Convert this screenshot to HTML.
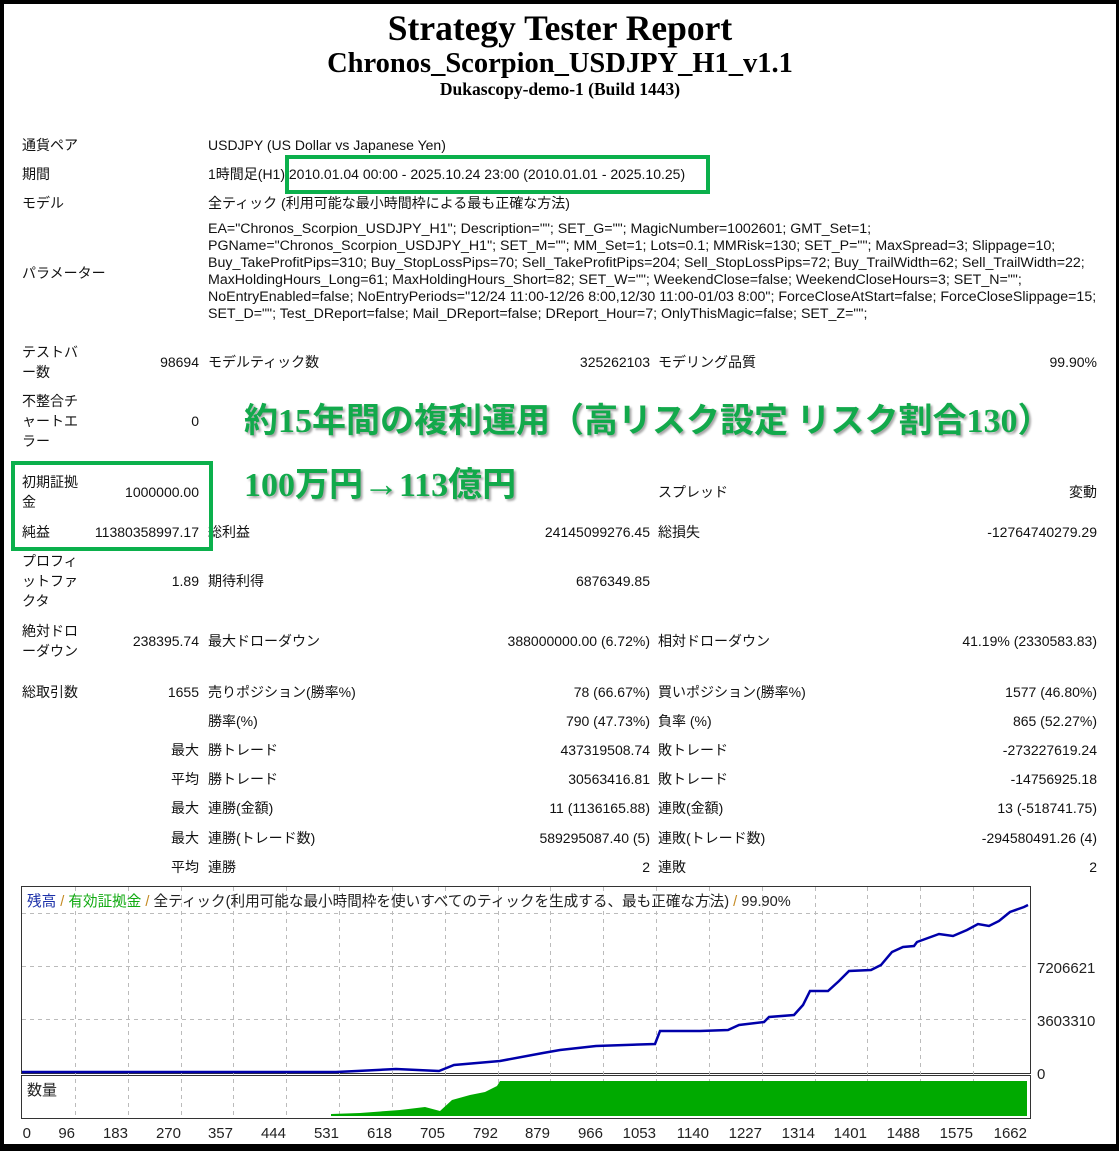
<!DOCTYPE html>
<html><head><meta charset="utf-8"><style>
*{margin:0;padding:0;box-sizing:border-box}
html,body{width:1119px;height:1151px;overflow:hidden;background:#000}
#pg{position:absolute;left:4px;top:4px;width:1112px;height:1140px;background:#fff;overflow:hidden}
.t{position:absolute;white-space:nowrap;font-family:"Liberation Sans","Noto Sans CJK JP",sans-serif;font-size:14px;color:#111;line-height:20px}
.h{position:absolute;left:0;width:1112px;text-align:center;font-family:"Liberation Serif","Noto Serif CJK SC",serif;font-weight:bold;color:#000;white-space:nowrap}
.ov{position:absolute;white-space:nowrap;font-family:"Liberation Serif","Noto Sans CJK JP",sans-serif;font-weight:bold;color:#12a94b;text-shadow:2px 2px 2px rgba(0,0,0,.35);line-height:40px}
.box{position:absolute;border:4px solid #0bb04c}
</style></head><body><div id="pg">
<div class="h" style="top:4px;font-size:35.5px;line-height:40px">Strategy Tester Report</div>
<div class="h" style="top:43px;font-size:28.5px;line-height:34px">Chronos_Scorpion_USDJPY_H1_v1.1</div>
<div class="h" style="top:75px;font-size:17.5px;line-height:20px">Dukascopy-demo-1 (Build 1443)</div>
</div>
<div id="c" style="position:absolute;left:0;top:0;width:1119px;height:1151px">
<div class="t" style="left:22px;top:135px">通貨ペア</div><div class="t" style="left:208px;top:135px">USDJPY (US Dollar vs Japanese Yen)</div>
<div class="t" style="left:22px;top:164px">期間</div><div class="t" style="left:208px;top:164px">1時間足(H1) 2010.01.04 00:00 - 2025.10.24 23:00 (2010.01.01 - 2025.10.25)</div>
<div class="t" style="left:22px;top:193px">モデル</div><div class="t" style="left:208px;top:193px">全ティック (利用可能な最小時間枠による最も正確な方法)</div>
<div class="t" style="left:22px;top:263px">パラメーター</div>
<div class="t" style="left:208px;top:221px;line-height:17px;font-size:14.2px">EA="Chronos_Scorpion_USDJPY_H1"; Description=""; SET_G=""; MagicNumber=1002601; GMT_Set=1;<br>PGName="Chronos_Scorpion_USDJPY_H1"; SET_M=""; MM_Set=1; Lots=0.1; MMRisk=130; SET_P=""; MaxSpread=3; Slippage=10;<br>Buy_TakeProfitPips=310; Buy_StopLossPips=70; Sell_TakeProfitPips=204; Sell_StopLossPips=72; Buy_TrailWidth=62; Sell_TrailWidth=22;<br>MaxHoldingHours_Long=61; MaxHoldingHours_Short=82; SET_W=""; WeekendClose=false; WeekendCloseHours=3; SET_N="";<br>NoEntryEnabled=false; NoEntryPeriods="12/24 11:00-12/26 8:00,12/30 11:00-01/03 8:00"; ForceCloseAtStart=false; ForceCloseSlippage=15;<br>SET_D=""; Test_DReport=false; Mail_DReport=false; DReport_Hour=7; OnlyThisMagic=false; SET_Z="";</div>

<div class="t" style="left:22px;top:342px">テストバ<br>ー数</div><div class="t" style="right:920px;top:352px">98694</div><div class="t" style="left:208px;top:352px">モデルティック数</div><div class="t" style="right:469px;top:352px">325262103</div><div class="t" style="left:658px;top:352px">モデリング品質</div><div class="t" style="right:22px;top:352px">99.90%</div>
<div class="t" style="left:22px;top:391px">不整合チ<br>ャートエ<br>ラー</div><div class="t" style="right:920px;top:411px">0</div>
<div class="t" style="left:22px;top:472px">初期証拠<br>金</div><div class="t" style="right:920px;top:482px">1000000.00</div><div class="t" style="left:658px;top:482px">スプレッド</div><div class="t" style="right:22px;top:482px">変動</div>
<div class="t" style="left:22px;top:522px">純益</div><div class="t" style="right:920px;top:522px">11380358997.17</div><div class="t" style="left:208px;top:522px">総利益</div><div class="t" style="right:469px;top:522px">24145099276.45</div><div class="t" style="left:658px;top:522px">総損失</div><div class="t" style="right:22px;top:522px">-12764740279.29</div>
<div class="t" style="left:22px;top:551px">プロフィ<br>ットファ<br>クタ</div><div class="t" style="right:920px;top:571px">1.89</div><div class="t" style="left:208px;top:571px">期待利得</div><div class="t" style="right:469px;top:571px">6876349.85</div>
<div class="t" style="left:22px;top:621px">絶対ドロ<br>ーダウン</div><div class="t" style="right:920px;top:631px">238395.74</div><div class="t" style="left:208px;top:631px">最大ドローダウン</div><div class="t" style="right:469px;top:631px">388000000.00 (6.72%)</div><div class="t" style="left:658px;top:631px">相対ドローダウン</div><div class="t" style="right:22px;top:631px">41.19% (2330583.83)</div>
<div class="t" style="left:22px;top:682px">総取引数</div><div class="t" style="right:920px;top:682px">1655</div><div class="t" style="left:208px;top:682px">売りポジション(勝率%)</div><div class="t" style="right:469px;top:682px">78 (66.67%)</div><div class="t" style="left:658px;top:682px">買いポジション(勝率%)</div><div class="t" style="right:22px;top:682px">1577 (46.80%)</div>
<div class="t" style="left:208px;top:711px">勝率(%)</div><div class="t" style="right:469px;top:711px">790 (47.73%)</div><div class="t" style="left:658px;top:711px">負率 (%)</div><div class="t" style="right:22px;top:711px">865 (52.27%)</div>
<div class="t" style="right:920px;top:740px">最大</div><div class="t" style="left:208px;top:740px">勝トレード</div><div class="t" style="right:469px;top:740px">437319508.74</div><div class="t" style="left:658px;top:740px">敗トレード</div><div class="t" style="right:22px;top:740px">-273227619.24</div>
<div class="t" style="right:920px;top:769px">平均</div><div class="t" style="left:208px;top:769px">勝トレード</div><div class="t" style="right:469px;top:769px">30563416.81</div><div class="t" style="left:658px;top:769px">敗トレード</div><div class="t" style="right:22px;top:769px">-14756925.18</div>
<div class="t" style="right:920px;top:798px">最大</div><div class="t" style="left:208px;top:798px">連勝(金額)</div><div class="t" style="right:469px;top:798px">11 (1136165.88)</div><div class="t" style="left:658px;top:798px">連敗(金額)</div><div class="t" style="right:22px;top:798px">13 (-518741.75)</div>
<div class="t" style="right:920px;top:828px">最大</div><div class="t" style="left:208px;top:828px">連勝(トレード数)</div><div class="t" style="right:469px;top:828px">589295087.40 (5)</div><div class="t" style="left:658px;top:828px">連敗(トレード数)</div><div class="t" style="right:22px;top:828px">-294580491.26 (4)</div>
<div class="t" style="right:920px;top:857px">平均</div><div class="t" style="left:208px;top:857px">連勝</div><div class="t" style="right:469px;top:857px">2</div><div class="t" style="left:658px;top:857px">連敗</div><div class="t" style="right:22px;top:857px">2</div>

<div class="box" style="left:285px;top:155px;width:425px;height:39px"></div>
<div class="box" style="left:11px;top:461px;width:202px;height:90px"></div>
<div class="ov" style="left:244px;top:402px;font-size:34px">約15年間の複利運用（高リスク設定 リスク割合130）</div>
<div class="ov" style="left:244px;top:464px;font-size:34px">100万円<span style="font-size:36px">→</span>113億円</div>

<svg style="position:absolute;left:0;top:0" width="1119" height="1151">
<rect x="21.5" y="886.5" width="1009" height="187" fill="#fff" stroke="#333"/>
<rect x="21.5" y="1075.5" width="1009" height="43" fill="#fff" stroke="#333"/>
<g stroke="#bbb" stroke-dasharray="4,4" stroke-width="1">
<line x1="22" y1="913.5" x2="1030" y2="913.5"/><line x1="22" y1="966.5" x2="1030" y2="966.5"/><line x1="22" y1="1019.5" x2="1030" y2="1019.5"/>
<line x1="75.5" y1="887" x2="75.5" y2="1118"/><line x1="128.5" y1="887" x2="128.5" y2="1118"/><line x1="181.5" y1="887" x2="181.5" y2="1118"/><line x1="233.5" y1="887" x2="233.5" y2="1118"/><line x1="286.5" y1="887" x2="286.5" y2="1118"/><line x1="339.5" y1="887" x2="339.5" y2="1118"/><line x1="392.5" y1="887" x2="392.5" y2="1118"/><line x1="445.5" y1="887" x2="445.5" y2="1118"/><line x1="498.5" y1="887" x2="498.5" y2="1118"/><line x1="550.5" y1="887" x2="550.5" y2="1118"/><line x1="603.5" y1="887" x2="603.5" y2="1118"/><line x1="656.5" y1="887" x2="656.5" y2="1118"/><line x1="709.5" y1="887" x2="709.5" y2="1118"/><line x1="762.5" y1="887" x2="762.5" y2="1118"/><line x1="815.5" y1="887" x2="815.5" y2="1118"/><line x1="867.5" y1="887" x2="867.5" y2="1118"/><line x1="920.5" y1="887" x2="920.5" y2="1118"/><line x1="973.5" y1="887" x2="973.5" y2="1118"/>
</g>
<polygon fill="#00aa00" points="331,1116 331,1114 360,1113 400,1110 425,1107 440,1111 452,1100 470,1095 485,1092 497,1086 500,1081 1027,1081 1027,1116"/>
<polyline fill="none" stroke="#0000aa" stroke-width="2.5" points="22,1072 336,1072 357,1071 396,1069 439,1071 454,1065 500,1061 543,1053 560,1050 596,1046 655,1044 660,1031 700,1031 728,1030 739,1025 764,1022 769,1017 794,1015 803,1005 810,991 828,991 839,981 849,971 871,970 881,965 892,952 903,947 914,946 917,942 939,934 953,936 967,930 978,924 989,926 999,921 1010,912 1024,907 1028,905"/>
<text x="27" y="906" font-family="Liberation Sans,Noto Sans CJK JP,sans-serif" font-size="14.6"><tspan fill="#1a2fa8">残高</tspan><tspan fill="#c48a22"> / </tspan><tspan fill="#11aa11">有効証拠金</tspan><tspan fill="#c48a22"> / </tspan><tspan fill="#222">全ティック(利用可能な最小時間枠を使いすべてのティックを生成する、最も正確な方法)</tspan><tspan fill="#c48a22"> / </tspan><tspan fill="#222">99.90%</tspan></text>
<text x="27" y="1095" font-family="Liberation Sans,Noto Sans CJK JP,sans-serif" font-size="15" fill="#222">数量</text>
<g font-family="Liberation Sans,sans-serif" font-size="15" fill="#222">
<text x="1037" y="973">7206621</text><text x="1037" y="1026">3603310</text><text x="1037" y="1079">0</text>
</g>
<g font-family="Liberation Sans,sans-serif" font-size="15" fill="#222" text-anchor="end">
<text x="31" y="1138">0</text><text x="75" y="1138">96</text><text x="128" y="1138">183</text><text x="181" y="1138">270</text><text x="233" y="1138">357</text><text x="286" y="1138">444</text><text x="339" y="1138">531</text><text x="392" y="1138">618</text><text x="445" y="1138">705</text><text x="498" y="1138">792</text><text x="550" y="1138">879</text><text x="603" y="1138">966</text><text x="656" y="1138">1053</text><text x="709" y="1138">1140</text><text x="762" y="1138">1227</text><text x="815" y="1138">1314</text><text x="867" y="1138">1401</text><text x="920" y="1138">1488</text><text x="973" y="1138">1575</text><text x="1027" y="1138">1662</text>
</g>
</svg>
</div>
</body></html>
